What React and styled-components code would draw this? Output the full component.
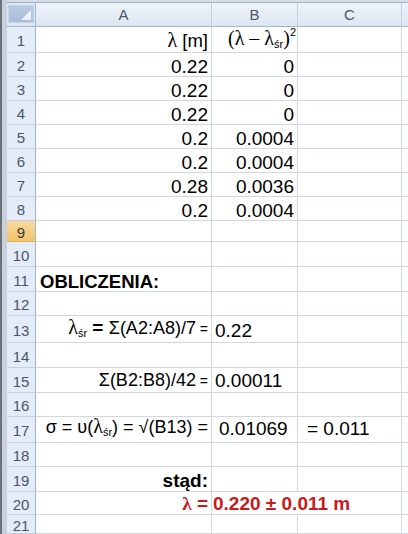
import React from 'react';
import styled, { createGlobalStyle } from 'styled-components';

const GlobalStyle = createGlobalStyle`
  html, body { margin: 0; padding: 0; background: #fff; }
  body { font-family: "Liberation Sans", Arial, sans-serif; }
`;

// row heights for rows 1..21, header row is separate
const rowHeights = [26, 24, 24, 24, 24, 24, 24, 24, 21, 25, 25, 24, 27, 25, 25, 24, 26, 24, 25, 23, 19];

const Window = styled.div`
  display: flex;
  width: 408px;
  height: 534px;
  overflow: hidden;
  background: #fff;
`;

const Frame = styled.div`
  flex: none;
  width: 7px;
  background: linear-gradient(to right, #6c7179 0 2px, #c7d1de 2px 7px);
`;

const Sheet = styled.div`
  flex: 1;
  display: grid;
  grid-template-columns: 29px 176px 86px 104px 1fr;
  grid-template-rows: 3px 24px ${rowHeights.map(h => h + 'px').join(' ')};
`;

const TopEdge = styled.div`
  grid-column: 1 / -1;
  background: #d6dde6;
  border-bottom: 1px solid #a3b0c0;
`;

const Corner = styled.div`
  box-sizing: border-box;
  background: #dfe6f0;
  border-right: 1px solid #9eb6ce;
  border-bottom: 1px solid #9eb6ce;
  padding: 2px 1px 3px 1px;
  display: flex;
`;

const CornerBox = styled.div`
  flex: 1;
  position: relative;
  background: linear-gradient(#b7c9df, #a9bdd7);
  border: 1px solid #c4d3e5;
`;

const CornerMark = styled.svg`
  position: absolute;
  right: 2px;
  bottom: 2px;
`;

const ColHead = styled.div`
  box-sizing: border-box;
  background: linear-gradient(#eef3fa, #dde6f1);
  border-right: 1px solid #c2cfe0;
  border-bottom: 1px solid #9eb6ce;
  display: flex;
  align-items: center;
  justify-content: center;
  font-size: 15px;
  color: #4a5669;
`;

const RowHead = styled.div`
  box-sizing: border-box;
  background: ${p => (p.$active ? 'linear-gradient(#f9d99d, #f2c46a)' : '#e4ecf7')};
  border-right: 1px solid #9eb6ce;
  border-bottom: 1px solid ${p => (p.$active ? '#e0b052' : '#c5d1e1')};
  display: flex;
  align-items: center;
  justify-content: center;
  padding-top: 2px;
  font-size: 15px;
  color: ${p => (p.$active ? '#3b3b3b' : '#4a5669')};
`;

const Cell = styled.div`
  grid-column: span ${p => p.$span || 1};
  box-sizing: border-box;
  min-width: 0;
  border-right: 1px solid #d0d7e5;
  border-bottom: 1px solid #d0d7e5;
  display: flex;
  align-items: flex-end;
  justify-content: ${p => (p.$right ? 'flex-end' : 'flex-start')};
  padding: 0 ${p => p.$pr ?? 3}px ${p => p.$pb ?? 0}px ${p => p.$pl ?? 3}px;
  font-size: ${p => p.$size || 19}px;
  line-height: 1;
  font-weight: ${p => (p.$bold ? 700 : 400)};
  color: ${p => (p.$red ? '#c8191b' : '#000')};
`;

const Value = styled.span`
  white-space: pre;
`;

const Lam = styled.span`
  font-family: "Liberation Serif", "DejaVu Serif", serif;
  font-size: ${p => (p.$size ? p.$size + 'px' : 'inherit')};
`;

const Sub = styled.span`
  font-family: "Liberation Sans", Arial, sans-serif;
  font-size: 11px;
  font-weight: 400;
  vertical-align: -3px;
`;

const Sup = styled.span`
  font-family: "Liberation Sans", Arial, sans-serif;
  font-size: 11px;
  vertical-align: 9px;
`;

const Small = styled.span`
  font-size: 14px;
`;

const Eq = styled.span`
  font-weight: 700;
  font-size: 19px;
`;

const rows = {
  1: {
    a: { right: true, size: 18.5, pb: 2, v: <><Lam $size={20}>λ</Lam> [m]</> },
    b: { right: true, size: 20, pb: 2, pr: 1, v: <><Lam>(λ – λ</Lam><Sub>śr</Sub><Lam>)</Lam><Sup>2</Sup></> },
  },
  2: { a: { right: true, v: '0.22' }, b: { right: true, v: '0' } },
  3: { a: { right: true, v: '0.22' }, b: { right: true, v: '0' } },
  4: { a: { right: true, v: '0.22' }, b: { right: true, v: '0' } },
  5: { a: { right: true, v: '0.2' }, b: { right: true, v: '0.0004' } },
  6: { a: { right: true, v: '0.2' }, b: { right: true, v: '0.0004' } },
  7: { a: { right: true, v: '0.28' }, b: { right: true, v: '0.0036' } },
  8: { a: { right: true, v: '0.2' }, b: { right: true, v: '0.0004' } },
  11: { a: { bold: true, size: 18.5, pl: 4, v: 'OBLICZENIA:' } },
  13: {
    a: { right: true, size: 18, pb: 3, v: <><Lam $size={20}>λ</Lam><Sub>śr</Sub><Eq> = </Eq>Σ(A2:A8)/7<Small> =</Small></> },
    b: { pb: 2, v: '0.22' },
  },
  15: {
    a: { right: true, size: 18, pb: 3, v: <>Σ(B2:B8)/42<Small> =</Small></> },
    b: { pb: 2, v: '0.00011' },
  },
  17: {
    a: { right: true, size: 18, pb: 4, v: <>σ = υ(<Lam $size={20}>λ</Lam><Sub>śr</Sub>) = √(B13) =</> },
    b: { pl: 7, pb: 4, v: '0.01069' },
    c: { pl: 9, pb: 4, v: '= 0.011' },
  },
  19: { a: { right: true, bold: true, pb: 1, v: 'stąd:' } },
  20: {
    a: { right: true, bold: true, red: true, pb: 1, v: <><Lam>λ</Lam> =</> },
    b: { bold: true, red: true, pb: 1, pl: 1, span: 2, v: '0.220 ± 0.011 m' },
  },
};

function SheetCell({ spec }) {
  if (!spec) return <Cell />;
  return (
    <Cell
      $right={spec.right}
      $bold={spec.bold}
      $red={spec.red}
      $size={spec.size}
      $pb={spec.pb}
      $pl={spec.pl}
      $pr={spec.pr}
      $span={spec.span}
    >
      <Value>{spec.v}</Value>
    </Cell>
  );
}

export default function App() {
  return (
    <>
      <GlobalStyle />
      <Window>
        <Frame />
        <Sheet>
          <TopEdge />
          <Corner>
            <CornerBox>
              <CornerMark width="10" height="10" viewBox="0 0 10 10">
                <polygon points="10,0 10,10 0,10" fill="#eef3f9" />
              </CornerMark>
            </CornerBox>
          </Corner>
          <ColHead>A</ColHead>
          <ColHead>B</ColHead>
          <ColHead>C</ColHead>
          <ColHead />
          {rowHeights.map((_, i) => {
            const n = i + 1;
            const r = rows[n] || {};
            return (
              <React.Fragment key={n}>
                <RowHead $active={n === 9}>{n}</RowHead>
                <SheetCell spec={r.a} />
                <SheetCell spec={r.b} />
                {!(r.b && r.b.span === 2) && <SheetCell spec={r.c} />}
                <Cell />
              </React.Fragment>
            );
          })}
        </Sheet>
      </Window>
    </>
  );
}
